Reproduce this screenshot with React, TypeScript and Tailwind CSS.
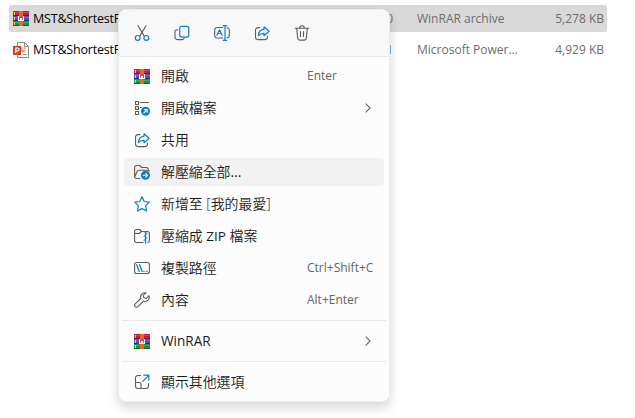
import type { ReactNode } from 'react';

const BLUE = '#0a7cd8';
const GRAY = '#5c5c5c';

function Icon({ children }: { children: ReactNode }) {
  return (
    <svg className="block size-4 shrink-0" viewBox="0 0 16 16" fill="none" stroke={GRAY} strokeWidth="1.1" strokeLinecap="round" strokeLinejoin="round">
      {children}
    </svg>
  );
}

function ArchiveIcon() {
  return (
    <svg className="block h-[15px] w-4 shrink-0" viewBox="0 0 16 15" shapeRendering="crispEdges">
      <rect width="16" height="5" fill="#c2184b" />
      <rect y="1" width="16" height="1" fill="#dc3a68" />
      <rect y="4" width="16" height="1" fill="#7d1238" />
      <rect y="5" width="16" height="5" fill="#4a50b5" />
      <rect y="6" width="16" height="1" fill="#6b70cd" />
      <rect y="9" width="16" height="1" fill="#2b2f78" />
      <rect y="10" width="16" height="5" fill="#159447" />
      <rect y="11" width="16" height="1" fill="#2cb25e" />
      <rect y="14" width="16" height="1" fill="#0b6330" />
      <path d="M1 1h1v3H1zM1 6h1v3H1zM1 11h1v3H1z" fill="#f3c744" />
      <rect x="6" width="4" height="15" fill="#e2691d" />
      <rect x="5" y="5" width="6" height="5" fill="#d0533a" />
      <path d="M5 5h1v5H5zM10 5h1v5h-1zM6 9h4v1H6zM7 7h2v2H7z" fill="#fff" />
    </svg>
  );
}

function PowerPointIcon() {
  return (
    <svg className="block size-4 shrink-0" viewBox="0 0 16 16">
      <path d="M4.5.5h7l4 4v11h-11z" fill="#fff" stroke="#8a8a8a" />
      <path d="M11.5.5v4h4" fill="none" stroke="#8a8a8a" />
      <circle cx="10.3" cy="7.6" r="2.8" fill="#e5a18d" />
      <path d="M10.3 4.8v2.8h2.8" stroke="#fff" fill="none" />
      <path d="M10 12.5h4" stroke="#999" />
      <rect y="4" width="8" height="9" fill="#d04423" />
      <path d="M2.800 11V6h1.700a1.450 1.450 0 0 1 0 3H2.800" fill="none" stroke="#fff" strokeWidth="1.2" />
    </svg>
  );
}

const CutIcon = () => (
  <Icon>
    <path d="M4 .7l6.100 10.200M12 .7L5.900 10.900" />
    <g stroke={BLUE} strokeWidth="1.2"><circle cx="3.700" cy="12.900" r="2.400" /><circle cx="12.300" cy="12.900" r="2.400" /></g>
  </Icon>
);

const CopyIcon = () => (
  <Icon>
    <path d="M3.800 4.700H3A2 2 0 0 0 1 6.700V12a2.600 2.600 0 0 0 2.600 2.600h4.600a2 2 0 0 0 2-1.600" />
    <rect x="5.700" y="1.300" width="9" height="10.800" rx="2" stroke={BLUE} strokeWidth="1.2" />
  </Icon>
);

const RenameIcon = () => (
  <Icon>
    <path d="M8.800 2.500H3.200A2.500 2.500 0 0 0 .7 5v5.500A2.500 2.500 0 0 0 3.200 13h5.600M13 2.700a2.500 2.500 0 0 1 2.300 2.500v5.100a2.500 2.500 0 0 1-2.300 2.500" />
    <path d="M2.900 10.300L5.500 4.800l2.600 5.500M3.800 8.500h3.400M11 1v14M9.200.7h3.600M9.200 15.300h3.600" stroke={BLUE} strokeWidth="1.2" />
  </Icon>
);

const ShareIcon = () => (
  <Icon>
    <path d="M5.800 2.600H4A2.500 2.500 0 0 0 1.500 5.100v7A2.500 2.500 0 0 0 4 14.600h7a2.500 2.500 0 0 0 2.500-2.500v-1" />
    <path d="M10 1.800l5.100 4.500-5.100 4.400V8.300c-2.600-.1-4.200.7-5.700 2.400.3-3.900 2.300-6.200 5.700-6.500z" stroke={BLUE} strokeWidth="1.2" />
  </Icon>
);

const TrashIcon = () => (
  <Icon>
    <path d="M1.200 3.300h13.600M5.700 3.100a2.300 2.300 0 0 1 4.600 0M2.700 3.500l1 9.700a2 2 0 0 0 2 1.900h4.600a2 2 0 0 0 2-1.900l1-9.700M6.500 6.500v5M9.500 6.500v5" />
  </Icon>
);

const OpenWithIcon = () => (
  <Icon>
    <g strokeLinejoin="miter"><path d="M1.500 1.500h3v3h-3zM1.500 6.500h3v3h-3zM1.500 11.500h3v3h-3z" /><path d="M6.500 2.500h8M6.500 7.500h1" /></g>
    <circle cx="11.500" cy="11.300" r="4.500" fill={BLUE} stroke="none" />
    <path d="M9.900 13l3.200-3.300M10.500 9.600h2.700v2.700" stroke="#fff" />
  </Icon>
);

const ExtractIcon = () => (
  <Icon>
    <path d="M6 14.500H2.600A2 2 0 0 1 .6 12.500V3.500a2 2 0 0 1 2-2H5.700l2 2h4.600a2 2 0 0 1 2 2.200M.8 12.700l2.300-5.200a2 2 0 0 1 1.800-1.200h9a1.500 1.500 0 0 1 1.400 1" />
    <circle cx="11.500" cy="11.300" r="4.500" fill={BLUE} stroke="none" />
    <path d="M9.300 11.300h4.200M11.800 9.500l1.800 1.800-1.800 1.800" stroke="#fff" />
  </Icon>
);

const StarIcon = () => (
  <Icon>
    <path d="M8 .8l2.200 4.700 5 .7-3.600 3.600.9 5.200L8 12.600 3.500 15l.9-5.200L.8 6.200l5-.7z" stroke={BLUE} strokeWidth="1.2" />
  </Icon>
);

const ZipIcon = () => (
  <Icon>
    <path d="M9 14.500H2.600A2 2 0 0 1 .6 12.500V3.500a2 2 0 0 1 2-2H5.500l2 2H13.400a2 2 0 0 1 2 2v7a2 2 0 0 1-1.600 2M.7 5.500h4.700l2-2" />
    <path d="M9.600 3.600h3.800M11.500 4v11" stroke={BLUE} strokeWidth="1.3" />
    <path d="M11.600 6h1.400M10 8h1.400M11.600 10h1.400M10 12h1.400" stroke={BLUE} />
  </Icon>
);

const PathIcon = () => (
  <Icon>
    <rect x=".6" y="2.500" width="14.800" height="11" rx="2" />
    <path d="M2.700 4.700l2.500 6.700M5.600 4.700l2.500 6.700M9.800 11.300h.3M12.700 11.300h.3" stroke={BLUE} strokeWidth="1.3" />
  </Icon>
);

const WrenchIcon = () => (
  <Icon>
    <path d="M10.800.8a4.300 4.300 0 0 0-4 5.700L1.200 11.900a1.900 1.900 0 0 0 2.800 2.800L9.500 9.200a4.300 4.300 0 0 0 5.500-5.500l-2.800 2.700-2.500-.8-.5-2.200L12 .9a5 5 0 0 0-1.200-.1z" />
  </Icon>
);

const MoreIcon = () => (
  <Icon>
    <path d="M6.500 1.500H4A2.500 2.500 0 0 0 1.500 4v8A2.500 2.500 0 0 0 4 14.500h8a2.500 2.500 0 0 0 2.500-2.500V9.500M1.700 8.500h3.800a1.500 1.500 0 0 1 1.500 1.500v4.300" />
    <path d="M8.700 7.300l6-6M9.900 1.200h4.900v4.900" stroke={BLUE} strokeWidth="1.2" />
  </Icon>
);

function Chevron() {
  return (
    <svg className="mr-[13px] block h-[10px] w-[6px]" viewBox="0 0 6 10" fill="none" stroke="#666" strokeWidth="1.1">
      <path d="M.7.7L5.100 5 .7 9.300" />
    </svg>
  );
}

interface ItemProps {
  icon: ReactNode;
  label: ReactNode;
  shortcut?: string;
  submenu?: boolean;
  active?: boolean;
}

function Item({ icon, label, shortcut, submenu, active }: ItemProps) {
  return (
    <div className={`flex h-7 items-center rounded pl-[10px] ${active ? 'bg-[#f2f2f2]' : ''}`}>
      {icon}
      <span className="ml-[11px] grow whitespace-nowrap text-[13.9px] font-[350] leading-7 text-[#1b1b1b]">{label}</span>
      {shortcut && <span className="w-[77px] whitespace-nowrap text-[12px] leading-7 text-[#666]">{shortcut}</span>}
      {submenu && <Chevron />}
    </div>
  );
}

interface FileProps {
  icon: ReactNode;
  date: string;
  type: string;
  size: string;
  selected?: boolean;
}

function FileRow({ icon, date, type, size, selected }: FileProps) {
  return (
    <div className={`flex h-[27px] items-center rounded-[2px] pl-1 text-[12px] text-[#6d6d6d] ${selected ? 'bg-[#d9d9d9]' : ''}`}>
      {icon}
      <span className="ml-[4px] w-[120px] pt-px whitespace-nowrap text-[12.5px] tracking-[-0.2px] text-black">MST&amp;ShortestPath</span>
      <span className="w-[240px] text-right">{date}</span>
      <span className="ml-6 w-[110px] whitespace-nowrap">{type}</span>
      <span className="grow pr-[3px] text-right">{size}</span>
    </div>
  );
}

export default function App() {
  return (
    <div className="relative h-[418px] w-[635px] overflow-hidden bg-white font-['Open_Sans','Noto_Sans_CJK_TC',sans-serif]">
      <div className="flex w-[607px] flex-col gap-1 pt-[5px] pl-[9px]">
        <FileRow icon={<ArchiveIcon />} date="10:20" type="WinRAR archive" size="5,278 KB" selected />
        <FileRow icon={<PowerPointIcon />} date="10:11" type="Microsoft Power..." size="4,929 KB" />
      </div>

      <div className="absolute top-[9px] left-[118px] flex h-[393px] w-[272px] flex-col rounded-lg border border-[#ebebeb] bg-[#fcfcfc] shadow-[0_6px_12px_rgba(0,0,0,0.16)]">
        <div className="flex h-[47px] shrink-0 items-center gap-6 rounded-t-lg border-b border-[#e9e8e8] bg-[#f8f8f8] pl-[15px]">
          <CutIcon />
          <CopyIcon />
          <RenameIcon />
          <ShareIcon />
          <TrashIcon />
        </div>
        <div className="flex flex-col gap-1 px-[5px] pt-[5px]">
          <Item icon={<ArchiveIcon />} label="開啟" shortcut="Enter" />
          <Item icon={<OpenWithIcon />} label="開啟檔案" submenu />
          <Item icon={<ShareIcon />} label="共用" />
          <Item icon={<ExtractIcon />} label={<>解壓縮全部<span className="font-normal">...</span></>} active />
          <Item icon={<StarIcon />} label="新增至 [我的最愛]" />
          <Item icon={<ZipIcon />} label={<>壓縮成 <span className="text-[13.5px] font-normal">ZIP</span> 檔案</>} />
          <Item icon={<PathIcon />} label="複製路徑" shortcut="Ctrl+Shift+C" />
          <Item icon={<WrenchIcon />} label="內容" shortcut="Alt+Enter" />
        </div>
        <div className="mx-[3px] mt-[6px] border-t border-[#e9e9e9] px-[2px] pt-[6px] pb-[6px]">
          <Item icon={<ArchiveIcon />} label={<span className="text-[13.6px] font-normal">WinRAR</span>} submenu />
        </div>
        <div className="mx-[3px] border-t border-[#e9e9e9] px-[2px] pt-[6px]">
          <Item icon={<MoreIcon />} label="顯示其他選項" />
        </div>
      </div>
    </div>
  );
}
